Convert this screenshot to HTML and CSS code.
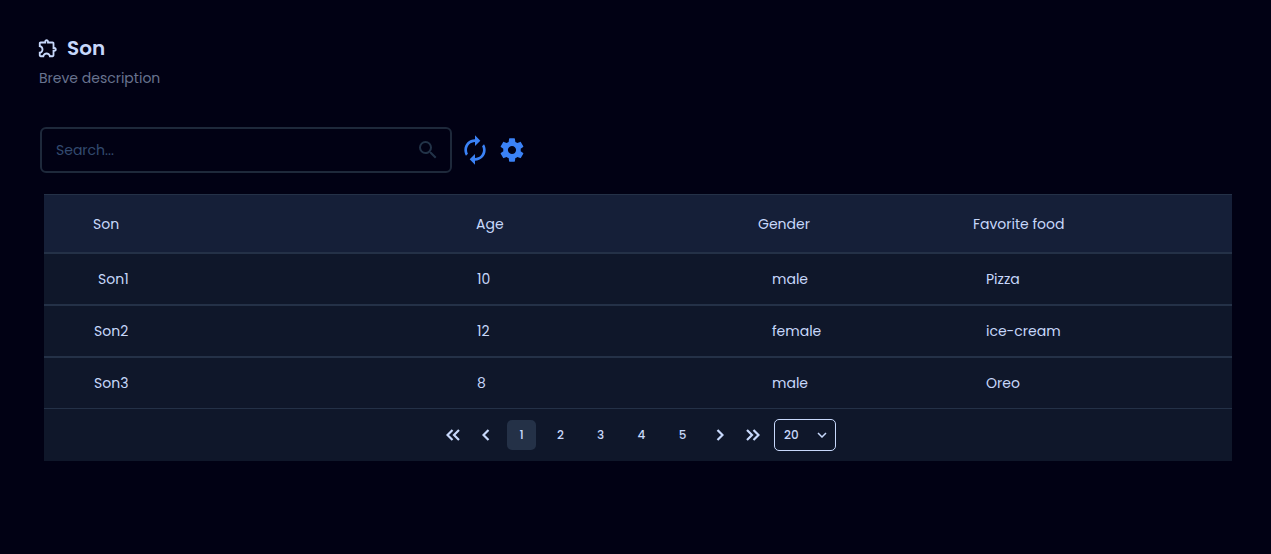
FILE: index.html
```html
<!DOCTYPE html>
<html lang="en">
<head>
<meta charset="utf-8">
<title>Son</title>
<link rel="stylesheet" href="styles.css">
</head>
<body>
<main class="page">
  <header class="heading">
    <h1 class="title">
      <svg class="title-icon" viewBox="0 0 24 24"><path d="M10.5 4.5c.28 0 .5.22.5.5v2h6v6h2c.28 0 .5.22.5.5s-.22.5-.5.5h-2v6h-2.12c-.68-1.75-2.39-3-4.38-3s-3.7 1.25-4.38 3H4v-2.12c1.75-.68 3-2.39 3-4.38 0-1.99-1.24-3.7-2.99-4.38L4 7h6V5c0-.28.22-.5.5-.5m0-2C9.12 2.5 8 3.62 8 5H4c-1.1 0-1.99.9-1.99 2v3.8h.29c1.49 0 2.7 1.21 2.7 2.7s-1.21 2.7-2.7 2.7H2V20c0 1.1.9 2 2 2h3.8v-.3c0-1.49 1.21-2.7 2.7-2.7s2.7 1.21 2.7 2.7v.3H17c1.1 0 2-.9 2-2v-4c1.38 0 2.5-1.12 2.5-2.5S20.38 11 19 11V7c0-1.1-.9-2-2-2h-4c0-1.38-1.12-2.5-2.5-2.5z"/></svg>
      <span>Son</span>
    </h1>
    <p class="description">Breve description</p>
  </header>
  <div class="toolbar">
    <div class="search">
      <span class="placeholder">Search...</span>
      <svg class="search-icon" viewBox="0 0 24 24"><path d="M15.5 14h-.79l-.28-.27A6.47 6.47 0 0 0 16 9.5 6.5 6.5 0 1 0 9.5 16c1.61 0 3.09-.59 4.23-1.57l.27.28v.79l5 4.99L20.49 19l-4.99-5zm-6 0C7.01 14 5 11.99 5 9.5S7.01 5 9.5 5 14 7.01 14 9.5 11.99 14 9.5 14z"/></svg>
    </div>
    <svg class="refresh" viewBox="0 0 24 24"><path d="M12 6v3l4-4-4-4v3c-4.42 0-8 3.58-8 8 0 1.57.46 3.03 1.24 4.26L6.7 14.8c-.45-.83-.7-1.79-.7-2.8 0-3.31 2.69-6 6-6zm6.76 1.74L17.3 9.2c.44.84.7 1.79.7 2.8 0 3.31-2.69 6-6 6v-3l-4 4 4 4v-3c4.42 0 8-3.58 8-8 0-1.57-.46-3.03-1.24-4.26z"/></svg>
    <svg class="settings" viewBox="0 0 24 24"><path d="M19.43 12.98c.04-.32.07-.64.07-.98s-.03-.66-.07-.98l2.11-1.65c.19-.15.24-.42.12-.64l-2-3.46c-.12-.22-.39-.3-.61-.22l-2.49 1c-.52-.4-1.08-.73-1.69-.98l-.38-2.65C14.46 2.18 14.25 2 14 2h-4c-.25 0-.46.18-.49.42l-.38 2.65c-.61.25-1.17.59-1.69.98l-2.49-1c-.23-.09-.49 0-.61.22l-2 3.46c-.13.22-.07.49.12.64l2.11 1.65c-.04.32-.07.65-.07.98s.03.66.07.98l-2.11 1.65c-.19.15-.24.42-.12.64l2 3.46c.12.22.39.3.61.22l2.49-1c.52.4 1.08.73 1.69.98l.38 2.65c.03.24.24.42.49.42h4c.25 0 .46-.18.49-.42l.38-2.65c.61-.25 1.17-.59 1.69-.98l2.49 1c.23.09.49 0 .61-.22l2-3.46c.12-.22.07-.49-.12-.64l-2.11-1.65zM12 15.5c-1.93 0-3.5-1.57-3.5-3.5s1.57-3.5 3.5-3.5 3.5 1.57 3.5 3.5-1.57 3.5-3.5 3.5z"/></svg>
  </div>
  <section class="table">
    <div class="row head"><span>Son</span><span>Age</span><span>Gender</span><span>Favorite food</span></div>
    <div class="row first"><span>Son1</span><span>10</span><span>male</span><span>Pizza</span></div>
    <div class="row"><span>Son2</span><span>12</span><span>female</span><span>ice-cream</span></div>
    <div class="row"><span>Son3</span><span>8</span><span>male</span><span>Oreo</span></div>
    <nav class="pager">
      <svg class="chevrons" viewBox="0 0 14 12"><path d="M6.5 1 1.5 6l5 5M13 1 8 6l5 5"/></svg>
      <svg class="chevron prev" viewBox="0 0 8 12"><path d="M6.5 1 1.5 6l5 5"/></svg>
      <span class="num current">1</span><span class="num">2</span><span class="num third">3</span><span class="num">4</span><span class="num">5</span>
      <svg class="chevron next" viewBox="0 0 8 12"><path d="m1.5 1 5 5-5 5"/></svg>
      <svg class="chevrons last" viewBox="0 0 14 12"><path d="m1 1 5 5-5 5M7.5 1l5 5-5 5"/></svg>
      <div class="size"><span>20</span><svg class="caret" viewBox="0 0 10 6"><path d="m1 1 4 4 4-4"/></svg></div>
    </nav>
  </section>
</main>
</body>
</html>
```
FILE: styles.css
```css
* { box-sizing: border-box; }
body {
  margin: 0;
  background: #010114;
  color: #c7d8fb;
  font: 14px/20px Poppins, Inter, sans-serif;
}
svg { display: block; flex: none; fill: currentColor; }
.page { padding: 34px 39px 0; }
.title { display: flex; align-items: center; gap: 8px; height: 28px; margin: 0; font-size: 20px; font-weight: 600; }
.title-icon { width: 22px; height: 22px; margin-left: -2px; }
.description { margin: 6px 0 0; color: #68738f; }
.toolbar { display: flex; align-items: center; height: 46px; margin: 39px 0 21px 1px; color: #3b82f6; }
.search { display: flex; align-items: center; justify-content: space-between; width: 412px; height: 46px; padding: 0 10px 0 14px; border: 2px solid #1e293b; border-radius: 6px; }
.placeholder { color: #334b70; }
.search-icon { width: 24px; height: 24px; color: #223348; }
.refresh { width: 32px; height: 32px; margin-left: 7px; }
.settings { width: 28px; height: 28px; margin-left: 7px; }
.table { margin: 0 0 0 5px; background: #0f172a; border-top: 1px solid #243147; }
.row { display: grid; grid-template-columns: 383px 295px 214px 1fr; align-items: center; height: 52px; padding-left: 50px; border-bottom: 2px solid #243147; }
.row:nth-child(4) { height: 51px; border-bottom-width: 1px; }
.head { grid-template-columns: 383px 282px 215px 1fr; height: 59px; padding-left: 49px; background: #151f38; }
.first span:first-child { padding-left: 4px; }
.pager { display: flex; align-items: center; height: 52px; padding-left: 402px; font-size: 12px; font-weight: 500; }
.pager svg { fill: none; stroke: currentColor; stroke-width: 2.2; }
.chevrons { width: 14px; height: 12px; }
.chevron { width: 8px; height: 12px; }
.prev { margin: 0 17px 0 22px; }
.num { width: 41px; text-align: center; }
.third { margin-left: -1px; }
.current { width: 29px; height: 30px; margin-right: 4px; border-radius: 5px; background: #243147; line-height: 30px; }
.next { margin-left: 13px; }
.last { margin: 0 14px 0 22px; }
.size { display: flex; align-items: center; justify-content: space-between; width: 62px; height: 32px; padding: 0 8px 0 9px; border: 1px solid #c7d8fb; border-radius: 5px; }
.pager .caret { width: 10px; height: 6px; stroke-width: 1.5; }
```
